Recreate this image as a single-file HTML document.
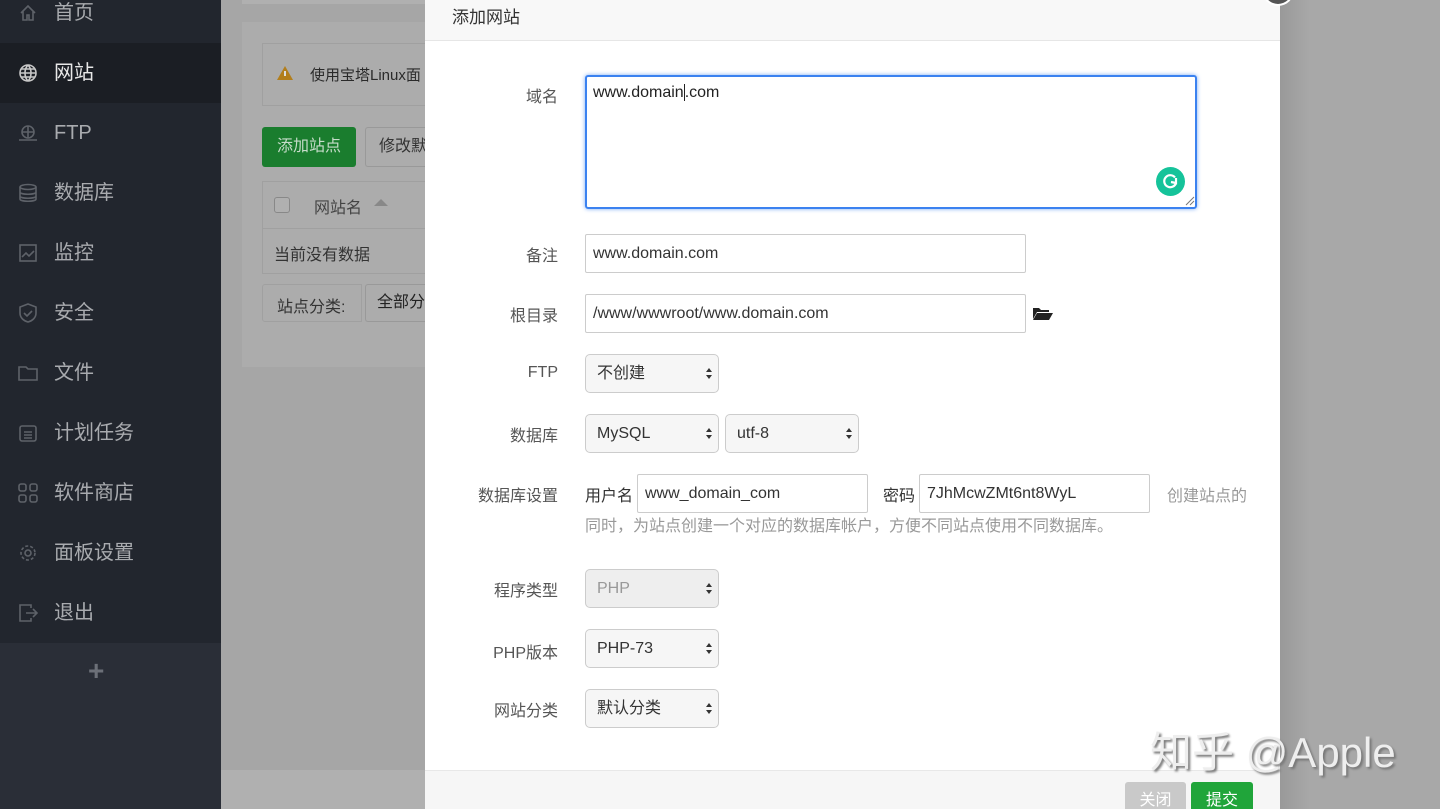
<!DOCTYPE html>
<html><head><meta charset="utf-8"><style>
*{box-sizing:border-box;margin:0;padding:0}
html,body{overflow:hidden}
body{width:1440px;height:809px;position:relative;background:#a5a5a5;font-family:"Liberation Sans","Noto Sans CJK SC",sans-serif}
.a{position:absolute}
.side{left:0;top:0;width:221px;height:809px;background:#22262e}
.mi{position:absolute;left:0;width:221px;height:60px;color:#a9abaf;font-size:20px;line-height:60px;padding-left:54px}
.mi svg{position:absolute;left:18px;top:20px}
.lbl{position:absolute;width:140px;left:418px;text-align:right;font-size:16px;color:#555}
.inp{position:absolute;border:1px solid #ccc;border-radius:2px;height:39px;background:#fff;font-size:16px;color:#333;line-height:37px;padding-left:7px}
.sel{position:absolute;border:1px solid #ccc;border-radius:5px;height:39px;background:#f6f6f6;font-size:16px;color:#333;line-height:37px;padding-left:11px}
.sel:after{content:"";position:absolute;right:6px;top:13px;width:0;height:0;border-left:3px solid transparent;border-right:3px solid transparent;border-bottom:4px solid #333}
.sel:before{content:"";position:absolute;right:6px;top:20px;width:0;height:0;border-left:3px solid transparent;border-right:3px solid transparent;border-top:4px solid #333}
</style></head><body>
<div class="a side"></div>
<div class="a" style="left:0;top:43px;width:221px;height:60px;background:#1b1e24"></div>
<div class="a" style="left:0;top:643px;width:221px;height:166px;background:#2a2e37"></div>
<div class="mi" style="top:-17px"><svg width="20" height="20" viewBox="0 0 20 20" fill="none" stroke="#5e6269" stroke-width="1.6"><path d="M3 10L10 3l7 7M5 8v9h4v-5h2v5h4V8"/></svg>首页</div>
<div class="mi" style="top:43px;color:#e8e8e8"><svg width="20" height="20" viewBox="0 0 20 20" fill="none" stroke="#c8c8c8" stroke-width="1.6"><circle cx="10" cy="10" r="8"/><path d="M2 10h16M10 2c-4 4-4 12 0 16M10 2c4 4 4 12 0 16M3.5 6h13M3.5 14h13"/></svg>网站</div>
<div class="mi" style="top:103px"><svg width="20" height="20" viewBox="0 0 20 20" fill="none" stroke="#5e6269" stroke-width="1.6"><circle cx="10" cy="9" r="6"/><path d="M4 9h12M10 3v12M1 17h18"/></svg>FTP</div>
<div class="mi" style="top:163px"><svg width="20" height="20" viewBox="0 0 20 20" fill="none" stroke="#5e6269" stroke-width="1.6"><ellipse cx="10" cy="4" rx="8" ry="2.5"/><path d="M2 4v12c0 3 16 3 16 0V4M2 9c0 3 16 3 16 0M2 13c0 3 16 3 16 0"/></svg>数据库</div>
<div class="mi" style="top:223px"><svg width="20" height="20" viewBox="0 0 20 20" fill="none" stroke="#5e6269" stroke-width="1.6"><rect x="2" y="2" width="16" height="16"/><path d="M4 14l4-4 3 3 5-5"/></svg>监控</div>
<div class="mi" style="top:283px"><svg width="20" height="20" viewBox="0 0 20 20" fill="none" stroke="#5e6269" stroke-width="1.6"><path d="M10 1l8 3v6c0 5-4 8-8 9-4-1-8-4-8-9V4z"/><path d="M6 10l3 3 5-5"/></svg>安全</div>
<div class="mi" style="top:343px"><svg width="20" height="20" viewBox="0 0 20 20" fill="none" stroke="#5e6269" stroke-width="1.6"><path d="M1 4h7l2 2h9v11H1z"/></svg>文件</div>
<div class="mi" style="top:403px"><svg width="20" height="20" viewBox="0 0 20 20" fill="none" stroke="#5e6269" stroke-width="1.6"><rect x="2" y="3" width="16" height="15" rx="2"/><path d="M6 9h8M6 12h8M6 15h8"/></svg>计划任务</div>
<div class="mi" style="top:463px"><svg width="20" height="20" viewBox="0 0 20 20" fill="none" stroke="#5e6269" stroke-width="1.6"><rect x="1" y="1" width="7" height="7" rx="2"/><rect x="12" y="1" width="7" height="7" rx="2"/><rect x="1" y="12" width="7" height="7" rx="2"/><rect x="12" y="12" width="7" height="7" rx="2"/></svg>软件商店</div>
<div class="mi" style="top:523px"><svg width="20" height="20" viewBox="0 0 20 20" fill="none" stroke="#5e6269" stroke-width="1.6"><circle cx="10" cy="10" r="3"/><circle cx="10" cy="10" r="7" stroke-dasharray="3 2"/></svg>面板设置</div>
<div class="mi" style="top:583px"><svg width="20" height="20" viewBox="0 0 20 20" fill="none" stroke="#5e6269" stroke-width="1.6"><path d="M13 5V2H2v16h11v-3M8 10h11M15 6l4 4-4 4"/></svg>退出</div>
<div class="a" style="left:88px;top:655px;color:#6c7078;font-size:28px;font-weight:bold">+</div>

<div class="a" style="left:221px;top:0;width:204px;height:809px;background:#a6a6a6"></div>
<div class="a" style="left:242px;top:0;width:183px;height:4px;background:#b0b0b0"></div>
<div class="a" style="left:242px;top:22px;width:183px;height:345px;background:#acacac"></div>
<div class="a" style="left:262px;top:43px;width:163px;height:63px;border:1px solid #a0a0a0;border-right:none;background:#acacac"></div>
<svg class="a" style="left:276px;top:65px" width="18" height="16"><path d="M9 1L17 15H1z" fill="#b27e1c"/><rect x="8" y="6" width="2" height="5" fill="#ddd"/></svg>
<div class="a" style="left:310px;top:64px;font-size:15px;color:#2a2a2a">使用宝塔Linux面</div>
<div class="a" style="left:262px;top:127px;width:94px;height:40px;background:#1a7d2e;border-radius:3px;color:#c6dcc9;font-size:16px;line-height:40px;text-align:center">添加站点</div>
<div class="a" style="left:365px;top:127px;width:60px;height:40px;border:1px solid #999;border-right:none;border-radius:3px 0 0 3px;color:#333;font-size:16px;line-height:38px;padding-left:13px;overflow:hidden;white-space:nowrap">修改默</div>
<div class="a" style="left:262px;top:181px;width:163px;height:48px;border:1px solid #a0a0a0;border-right:none"></div>
<div class="a" style="left:274px;top:197px;width:16px;height:16px;border:1px solid #888;border-radius:3px;background:#b0b0b0"></div>
<div class="a" style="left:314px;top:194px;font-size:16px;color:#444">网站名</div>
<div class="a" style="left:374px;top:199px;width:0;height:0;border-left:7px solid transparent;border-right:7px solid transparent;border-bottom:7px solid #888"></div>
<div class="a" style="left:262px;top:229px;width:163px;height:45px;border:1px solid #a0a0a0;border-top:none;border-right:none"></div>
<div class="a" style="left:274px;top:241px;font-size:16px;color:#333">当前没有数据</div>
<div class="a" style="left:262px;top:284px;width:100px;height:38px;border:1px solid #a0a0a0;border-radius:3px 0 0 3px"></div>
<div class="a" style="left:277px;top:293px;font-size:16px;color:#333">站点分类:</div>
<div class="a" style="left:365px;top:284px;width:60px;height:38px;border:1px solid #999;border-right:none;border-radius:3px 0 0 3px;font-size:16px;color:#222;line-height:36px;padding-left:11px;white-space:nowrap;overflow:hidden">全部分</div>
<div class="a" style="left:221px;top:770px;width:204px;height:39px;background:#b0b0b0"></div>

<div class="a" style="left:1280px;top:0;width:160px;height:809px;background:linear-gradient(90deg,#999 0,#a8a8a8 30px,#a8a8a8)"></div>

<div class="a" style="left:425px;top:0;width:855px;height:809px;background:#fff"></div>
<div class="a" style="left:425px;top:0;width:855px;height:41px;background:#f8f8f8;border-bottom:1px solid #e6e6e6"></div>
<div class="a" style="left:452px;top:3px;font-size:17px;color:#333">添加网站</div>
<div class="a" style="left:1262px;top:-13px;width:32px;height:19px;border-radius:0 0 16px 16px;background:#555;border:2px solid #fff;border-top:none"></div>

<div class="lbl" style="top:83px">域名</div>
<div class="a" style="left:585px;top:75px;width:612px;height:134px;border:2px solid #3b82f0;border-radius:3px;box-shadow:0 0 4px #7aaaf5"></div>
<div class="a" style="left:593px;top:84px;font-size:16px;color:#222">www.domain<span style="border-left:1px solid #222">.</span>com</div>
<div class="a" style="left:1156px;top:167px;width:29px;height:29px;border-radius:50%;background:#15c39a"></div>
<svg class="a" style="left:1156px;top:167px" width="29" height="29"><path d="M19 10.5A6 6 0 1 0 20 16M15 15l5 1 0-5" fill="none" stroke="#fff" stroke-width="2.2"/></svg>
<svg class="a" style="left:1185px;top:196px" width="10" height="10"><path d="M1 9L9 1M5 9L9 5" stroke="#777" stroke-width="1"/></svg>

<div class="lbl" style="top:242px">备注</div>
<div class="inp" style="left:585px;top:234px;width:441px">www.domain.com</div>
<div class="lbl" style="top:302px">根目录</div>
<div class="inp" style="left:585px;top:294px;width:441px">/www/wwwroot/www.domain.com</div>
<svg class="a" style="left:1032px;top:305px" width="22" height="16"><path d="M1 3h6l2 2h8v2H5L1 14z M5 8h16l-4 7H1z" fill="#222"/></svg>

<div class="lbl" style="top:364px">FTP</div>
<div class="sel" style="left:585px;top:354px;width:134px">不创建</div>
<div class="lbl" style="top:422px">数据库</div>
<div class="sel" style="left:585px;top:414px;width:134px">MySQL</div>
<div class="sel" style="left:725px;top:414px;width:134px">utf-8</div>
<div class="lbl" style="top:482px">数据库设置</div>
<div class="a" style="left:585px;top:482px;font-size:16px;color:#333">用户名</div>
<div class="inp" style="left:637px;top:474px;width:231px">www_domain_com</div>
<div class="a" style="left:883px;top:482px;font-size:16px;color:#333">密码</div>
<div class="inp" style="left:919px;top:474px;width:231px">7JhMcwZMt6nt8WyL</div>
<div class="a" style="left:1167px;top:482px;font-size:16px;color:#999;white-space:nowrap">创建站点的</div>
<div class="a" style="left:585px;top:512px;font-size:16px;color:#999;white-space:nowrap">同时，为站点创建一个对应的数据库帐户，方便不同站点使用不同数据库。</div>

<div class="lbl" style="top:577px">程序类型</div>
<div class="sel" style="left:585px;top:569px;width:134px;background:#eee;color:#999">PHP</div>
<div class="lbl" style="top:639px">PHP版本</div>
<div class="sel" style="left:585px;top:629px;width:134px">PHP-73</div>
<div class="lbl" style="top:697px">网站分类</div>
<div class="sel" style="left:585px;top:689px;width:134px">默认分类</div>

<div class="a" style="left:425px;top:770px;width:855px;height:39px;background:#f6f6f6;border-top:1px solid #e8e8e8"></div>
<div class="a" style="left:1125px;top:782px;width:61px;height:40px;background:#c9c9c9;border-radius:3px;color:#fff;font-size:16px;text-align:center;line-height:38px">关闭</div>
<div class="a" style="left:1191px;top:782px;width:62px;height:40px;background:#20a53a;border-radius:3px;color:#fff;font-size:16px;text-align:center;line-height:38px">提交</div>

<div class="a" style="left:1150px;top:719px;font-size:42px;color:#eee;text-shadow:2px 2px 2px #777;white-space:nowrap">知乎 @Apple</div>
</body></html>
